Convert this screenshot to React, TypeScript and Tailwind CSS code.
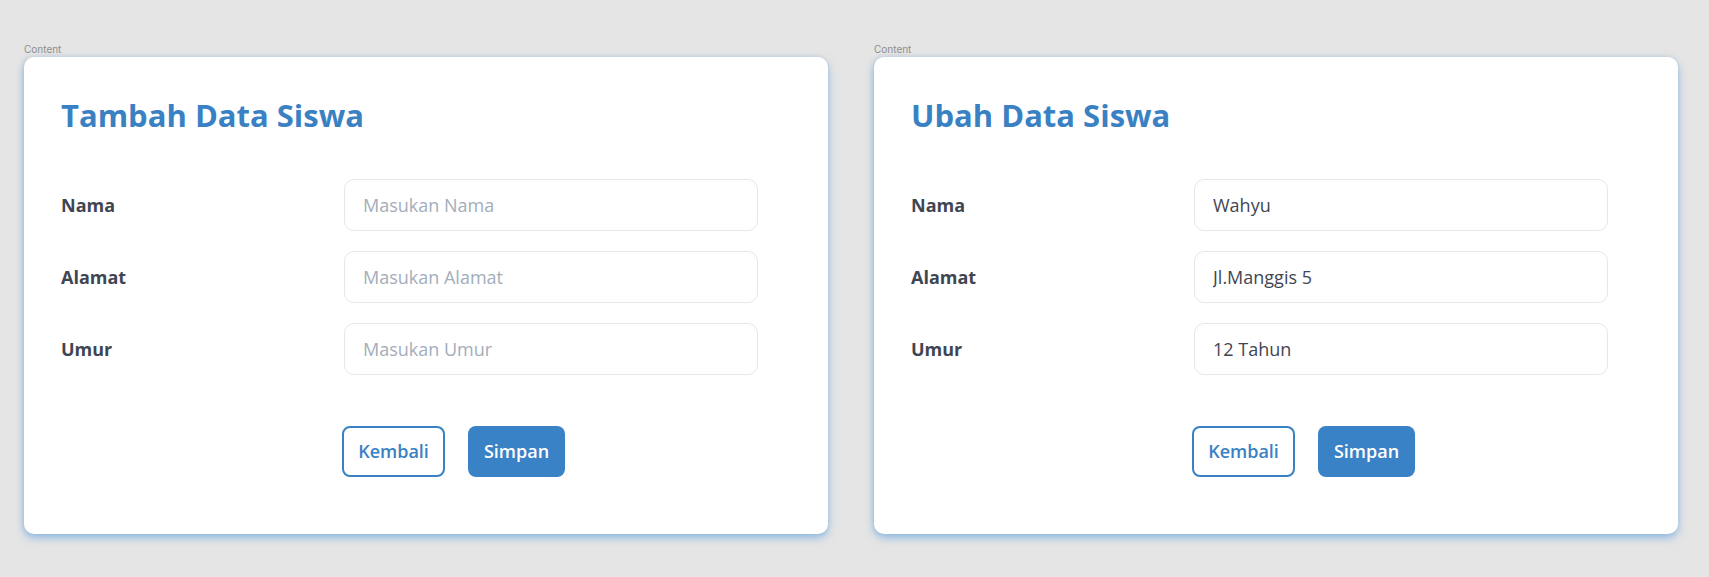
import React from "react";

type Field = { label: string; placeholder: string; value?: string };

const tambahFields: Field[] = [
  { label: "Nama", placeholder: "Masukan Nama" },
  { label: "Alamat", placeholder: "Masukan Alamat" },
  { label: "Umur", placeholder: "Masukan Umur" },
];

const ubahFields: Field[] = [
  { label: "Nama", placeholder: "Masukan Nama", value: "Wahyu" },
  { label: "Alamat", placeholder: "Masukan Alamat", value: "Jl.Manggis 5" },
  { label: "Umur", placeholder: "Masukan Umur", value: "12 Tahun" },
];

function FormCard({ title, fields }: { title: string; fields: Field[] }) {
  return (
    <div className="flex flex-col">
      <div className="h-[14px] text-[10px] leading-[14px] text-[#8e8e8e] font-['Inter',sans-serif]">
        Content
      </div>
      <div className="mt-[1px] w-[804px] h-[477px] bg-white rounded-[10px] shadow-[0_4px_8px_rgba(70,150,225,0.5),-1px_0_4px_rgba(120,150,180,0.25)] pl-[37px] pt-[37px]">
        <h1 className="text-[31px] leading-[43px] font-bold text-[#3a81c3]">{title}</h1>
        <div className="mt-[42px] flex flex-col gap-[20px]">
          {fields.map((f) => (
            <div key={f.label} className="flex items-center">
              <label className="w-[283px] text-[18px] font-bold text-[#3f4652]">{f.label}</label>
              <input
                readOnly
                defaultValue={f.value}
                placeholder={f.placeholder}
                className="w-[414px] h-[52px] rounded-[10px] border border-[#e3e8ef] bg-white pl-[18px] text-[18px] text-[#3f4652] placeholder:text-[#a3adba] outline-none"
              />
            </div>
          ))}
        </div>
        <div className="mt-[51px] ml-[281px] flex gap-[23px]">
          <button className="w-[103px] h-[51px] rounded-[8px] border-2 border-[#3a81c3] text-[18px] font-semibold text-[#3a81c3] bg-white">
            Kembali
          </button>
          <button className="w-[97px] h-[51px] rounded-[8px] bg-[#3a82c6] text-[18px] font-semibold text-white">
            Simpan
          </button>
        </div>
      </div>
    </div>
  );
}

export default function App() {
  return (
    <main className="min-h-screen w-full bg-[#e5e5e5] pl-[24px] pt-[42px] font-['Open_Sans',sans-serif]">
      <div className="flex gap-[46px]">
        <FormCard title="Tambah Data Siswa" fields={tambahFields} />
        <FormCard title="Ubah Data Siswa" fields={ubahFields} />
      </div>
    </main>
  );
}
